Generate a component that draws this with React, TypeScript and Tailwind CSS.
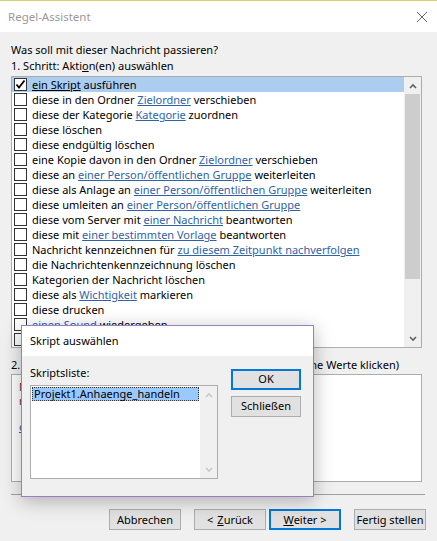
import React from 'react'

const F = '"Noto Sans", "Open Sans", sans-serif'

type Part = string | { l: string; plain?: boolean }

const actions: Part[][] = [
  [{ l: 'ein Skript', plain: true }, ' ausführen'],
  ['diese in den Ordner ', { l: 'Zielordner' }, ' verschieben'],
  ['diese der Kategorie ', { l: 'Kategorie' }, ' zuordnen'],
  ['diese löschen'],
  ['diese endgültig löschen'],
  ['eine Kopie davon in den Ordner ', { l: 'Zielordner' }, ' verschieben'],
  ['diese an ', { l: 'einer Person/öffentlichen Gruppe' }, ' weiterleiten'],
  ['diese als Anlage an ', { l: 'einer Person/öffentlichen Gruppe' }, ' weiterleiten'],
  ['diese umleiten an ', { l: 'einer Person/öffentlichen Gruppe' }],
  ['diese vom Server mit ', { l: 'einer Nachricht' }, ' beantworten'],
  ['diese mit ', { l: 'einer bestimmten Vorlage' }, ' beantworten'],
  ['Nachricht kennzeichnen für ', { l: 'zu diesem Zeitpunkt nachverfolgen' }],
  ['die Nachrichtenkennzeichnung löschen'],
  ['Kategorien der Nachricht löschen'],
  ['diese als ', { l: 'Wichtigkeit' }, ' markieren'],
  ['diese drucken'],
  [{ l: 'einen Sound' }, ' wiedergeben'],
  ['diese als gelesen markieren'],
]

function Check({ on }: { on?: boolean }) {
  return (
    <span className="w-[13px] h-[13px] shrink-0 border border-[#333333] bg-white flex items-center justify-center">
      {on && (
        <svg width="11" height="11" viewBox="0 0 11 11">
          <path d="M1.5 5.5 L4 8.5 L9.5 1.5" stroke="#000" strokeWidth="1.8" fill="none" />
        </svg>
      )}
    </span>
  )
}

function Btn({ children, primary, w = 'w-[72px]' }: { children: React.ReactNode; primary?: boolean; w?: string }) {
  return (
    <div
      className={`${w} h-[21px] flex items-center justify-center whitespace-nowrap bg-[#e1e1e1] text-[11px] text-black ${
        primary ? 'border-2 border-[#0078d7]' : 'border border-[#adadad]'
      }`}
    >
      {children}
    </div>
  )
}

function Arrow({ up, color = '#606060' }: { up?: boolean; color?: string }) {
  return (
    <svg width="8" height="6" viewBox="0 0 8 6">
      <path d={up ? 'M1 5 L4 2 L7 5' : 'M1 1 L4 4 L7 1'} stroke={color} strokeWidth="1.6" fill="none" />
    </svg>
  )
}

export default function App() {
  return (
    <div className="w-[437px] h-[541px] bg-[#f0f0f0] relative overflow-hidden text-black" style={{ fontFamily: F }}>
      {/* Titelleiste */}
      <div className="h-[32px] bg-white border-t border-[#d9cf6f] flex items-center justify-between pl-[8px] pr-[9px]">
        <span className="text-[11.5px] text-[#999999]">Regel-Assistent</span>
        <svg width="12" height="12" viewBox="0 0 12 12">
          <path d="M1 1 L11 11 M11 1 L1 11" stroke="#666" strokeWidth="1" />
        </svg>
      </div>

      <div className="px-[11px] pt-[10px] text-[11px] leading-[16px]">
        <p className="whitespace-nowrap">Was soll mit dieser Nachricht passieren?</p>
        <p className="whitespace-nowrap">
          1. Schritt: Akti<span className="underline">o</span>n(en) auswählen
        </p>

        {/* Aktionsliste */}
        <div className="mt-[2px] w-[411px] h-[272px] border border-[#adadad] bg-white flex">
          <div className="flex-1 overflow-hidden leading-[15px]">
            {actions.map((row, i) => (
              <div
                key={i}
                className={`h-[15px] flex items-center gap-[5px] pl-[2px] ${i === 0 ? 'bg-[#aacdf0]' : ''}`}
              >
                <Check on={i === 0} />
                <span className="whitespace-nowrap">
                  {row.map((p, j) =>
                    typeof p === 'string' ? (
                      <span key={j}>{p}</span>
                    ) : (
                      <span key={j} className={p.plain ? 'underline' : 'underline text-[#2f63a8]'}>
                        {p.l}
                      </span>
                    )
                  )}
                </span>
              </div>
            ))}
          </div>
          <div className="w-[17px] flex flex-col bg-[#f0f0f0]">
            <div className="h-[17px] flex items-center justify-center">
              <Arrow up />
            </div>
            <div className="h-[185px] mx-[1px] bg-[#cdcdcd]" />
            <div className="flex-1" />
            <div className="h-[17px] flex items-center justify-center">
              <Arrow />
            </div>
          </div>
        </div>

        <p className="mt-[9px] whitespace-nowrap">
          2. Schritt: Regelbeschreibung bearbeiten (auf unterstrichene Werte klicken)
        </p>
        <div className="mt-[1px] w-[411px] h-[108px] border border-[#adadad] bg-white px-[7px] pt-[5px] leading-[14px] text-[#7b1b2a] whitespace-nowrap">
          <p>Nach Erhalt einer Nachricht</p>
          <p>mit einem Skript</p>
          <p className="mt-[12px] underline text-[#2f63a8]">ein Skript ausführen</p>
        </div>

        <div className="mt-[12px] h-[1px] w-[414px] bg-[#a0a0a0]" />

        <div className="mt-[14px] flex justify-end gap-[13px]">
          <Btn>Abbrechen</Btn>
          <div className="flex gap-[3px]">
            <Btn>
              &lt; <span className="underline ml-[4px]">Z</span>urück
            </Btn>
            <Btn primary>
              <span className="underline">W</span>eiter &gt;
            </Btn>
          </div>
          <Btn>Fertig stellen</Btn>
        </div>
      </div>

      {/* Dialog Skript auswählen */}
      <div className="absolute left-[21px] top-[325px] w-[293px] h-[172px] border border-[#9a7fc6] bg-[#f0f0f0] shadow-[0_4px_18px_rgba(0,0,0,0.28)] flex flex-col text-[11px]">
        <div className="h-[30px] bg-white flex items-center pl-[8px]">Skript auswählen</div>
        <div className="flex-1 flex pl-[8px] pt-[9px]">
          <div className="flex flex-col">
            <span className="leading-[16px]">Skriptsliste:</span>
            <div className="mt-[4px] w-[188px] h-[94px] border border-[#adadad] bg-white flex">
              <div className="flex-1 p-[1px]">
                <div className="h-[14px] bg-[#99c9ff] outline-1 outline-dotted outline-[#333] -outline-offset-1 flex items-center pl-[2px] leading-[14px] whitespace-nowrap">
                  Projekt1.Anhaenge_handeln
                </div>
              </div>
              <div className="w-[17px] bg-[#f0f0f0] flex flex-col justify-between">
                <div className="h-[17px] flex items-center justify-center">
                  <Arrow up color="#c8c8c8" />
                </div>
                <div className="h-[17px] flex items-center justify-center">
                  <Arrow color="#c8c8c8" />
                </div>
              </div>
            </div>
          </div>
          <div className="ml-[13px] mt-[4px] flex flex-col gap-[6px]">
            <Btn primary w="w-[70px]">OK</Btn>
            <Btn w="w-[70px]">Schließen</Btn>
          </div>
        </div>
      </div>
    </div>
  )
}
